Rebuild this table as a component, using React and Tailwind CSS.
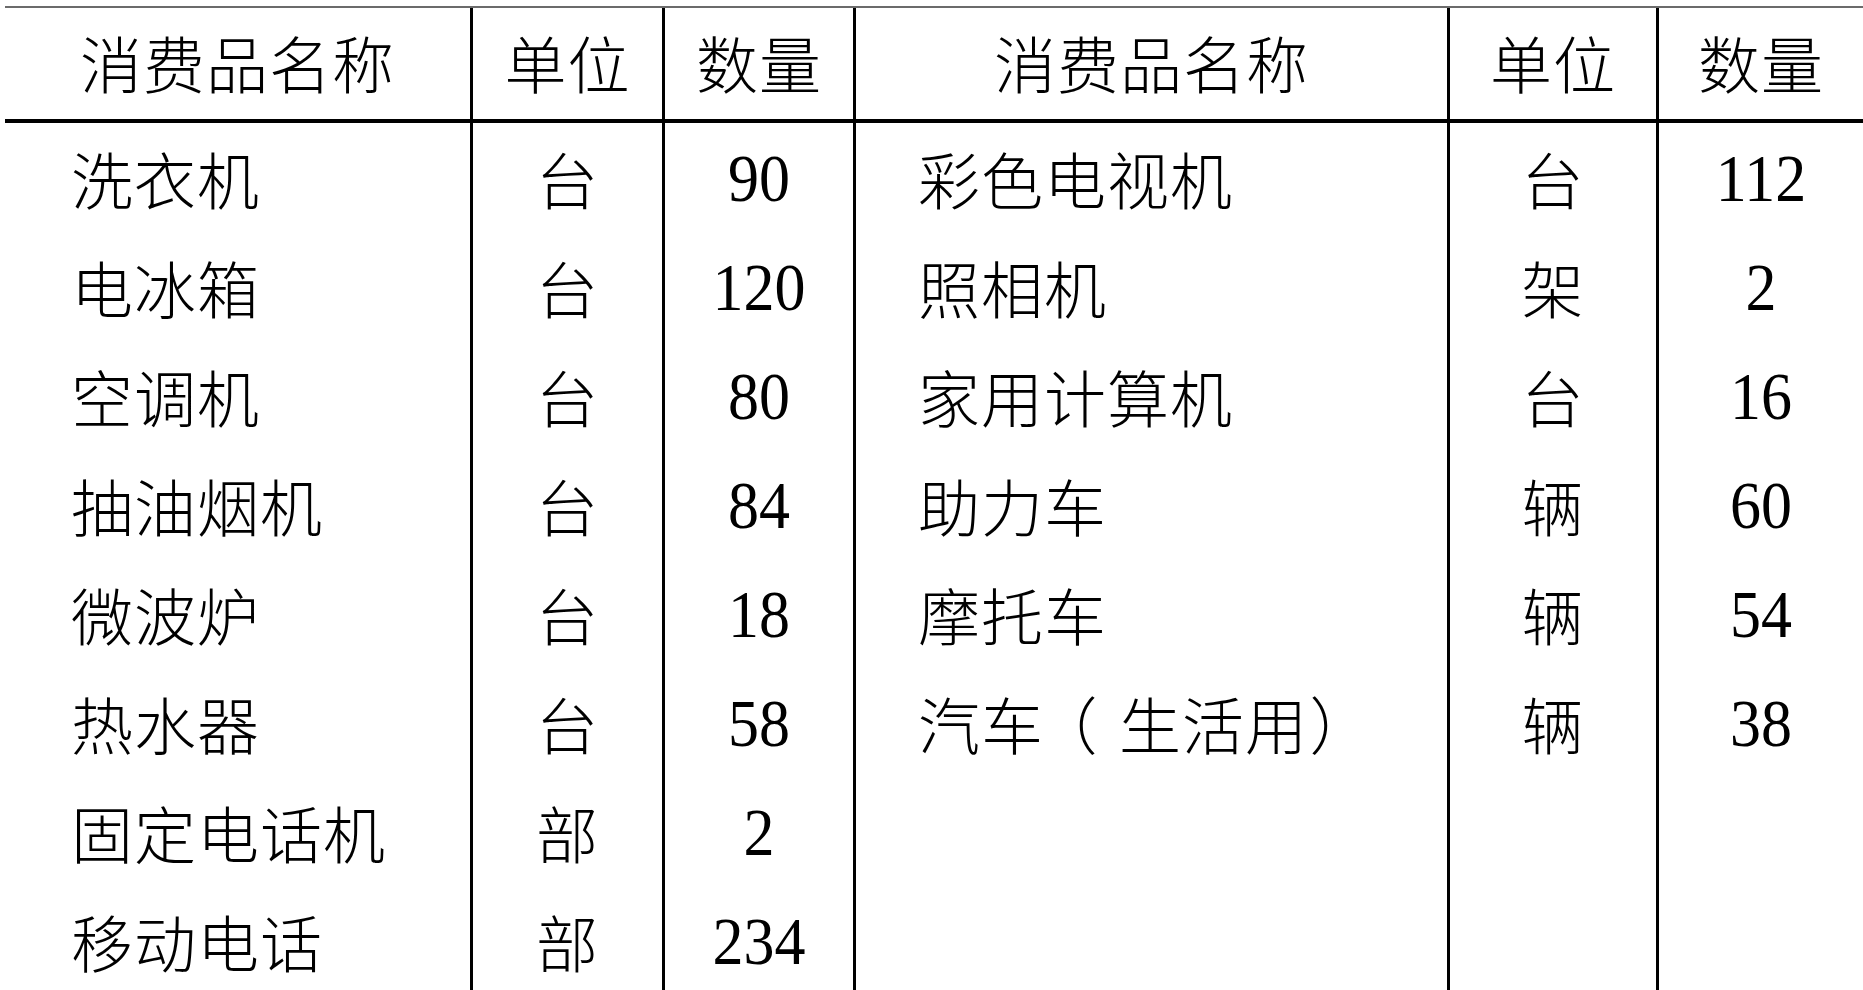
const rows = [
  ['洗衣机', '台', '90', '彩色电视机', '台', '112'],
  ['电冰箱', '台', '120', '照相机', '架', '2'],
  ['空调机', '台', '80', '家用计算机', '台', '16'],
  ['抽油烟机', '台', '84', '助力车', '辆', '60'],
  ['微波炉', '台', '18', '摩托车', '辆', '54'],
  ['热水器', '台', '58', 'car', '辆', '38'],
  ['固定电话机', '部', '2', '', '', ''],
  ['移动电话', '部', '234', '', '', ''],
];

const cjk =
  "font-['Noto_Sans_CJK_SC',sans-serif] font-light text-[62px] tracking-[1px] leading-none";
const num = "font-['Liberation_Serif','Times_New_Roman',serif] text-[62px] leading-none inline-block scale-y-[1.1]";

function Num({ children }) {
  return <span className={num}>{children}</span>;
}

// 汽车（生活用）: the full-width brackets get a whole cell each, as in the print
function Car() {
  return (
    <span className={`${cjk} flex items-center`}>
      <span>汽车</span>
      <span className="inline-flex w-[88px] -ml-[13px] justify-center pr-[16px]">（</span>
      <span>生活用</span>
      <span className="inline-flex w-[60px] justify-center pl-[6px]">）</span>
    </span>
  );
}

export default function App() {
  const head = ['消费品名称', '单位', '数量', '消费品名称', '单位', '数量'];
  return (
    <div className="w-[1863px] h-[990px] overflow-hidden bg-white text-black pl-[5px] pt-[6px]">
      <div className="border-t-2 border-[#6b6b6b] grid grid-cols-[465px_192px_191px_594px_209px_1fr]">
        {head.map((h, i) => (
          <div
            key={i}
            className={`h-[115px] pb-[4px] border-b-4 border-black flex items-center justify-center ${cjk} ${i > 0 ? 'border-l-[3px]' : ''}`}
          >
            {h}
          </div>
        ))}
        {rows.map((r, ri) =>
          r.map((c, ci) => {
            const isName = ci === 0 || ci === 3;
            const isNum = ci === 2 || ci === 5;
            let body = <span className={cjk}>{c}</span>;
            if (isNum) body = <Num>{c}</Num>;
            if (c === 'car') body = <Car />;
            return (
              <div
                key={ri + '-' + ci}
                className={`h-[109px] flex items-center ${isName ? 'justify-start' : 'justify-center'} ${ci === 0 ? 'pl-[66px]' : ''} ${ci === 3 ? 'pl-[62px]' : ''} ${ci > 0 ? 'border-l-[3px] border-black' : ''}`}
              >
                {body}
              </div>
            );
          })
        )}
      </div>
    </div>
  );
}
